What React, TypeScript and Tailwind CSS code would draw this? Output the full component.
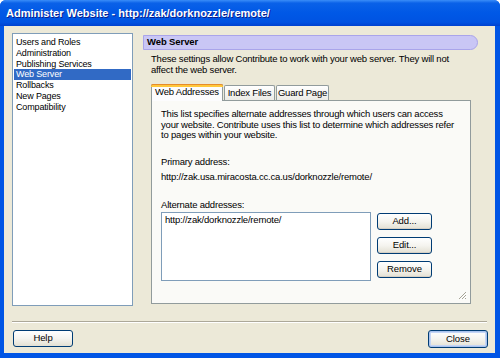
import React from "react";

const font = { fontFamily: '"Liberation Sans", Arial, sans-serif' };

function XPButton({ label }: { label: string }) {
  return (
    <div className="w-[55px] h-[17px] rounded-[3px] border border-[#003C74] flex items-center justify-center text-[9.5px] tracking-[-0.1px] text-black bg-gradient-to-b from-[#FFFFFF] via-[#F5F4EF] to-[#E3E0D3] shadow-[inset_0_-1px_0_#D6D0C5]">
      {label}
    </div>
  );
}

export default function App() {
  const items = [
    "Users and Roles",
    "Administration",
    "Publishing Services",
    "Web Server",
    "Rollbacks",
    "New Pages",
    "Compatibility",
  ];
  return (
    <div
      className="w-[500px] h-[358px] flex flex-col bg-[#0055E5] overflow-hidden rounded-t-[6px]"
      style={font}
    >
      {/* Title bar */}
      <div className="h-[26px] shrink-0 flex items-center pl-[6px] bg-[linear-gradient(to_bottom,#3A8DF8_0%,#0A61E8_12%,#0058E6_50%,#0053E2_85%,#0042D0_100%)]">
        <span className="text-white font-bold text-[11px] [text-shadow:1px_1px_0_#0A1E8C]">
          Administer Website - http://zak/dorknozzle/remote/
        </span>
      </div>
      {/* Body */}
      <div className="flex-1 ml-[4px] mr-[5px] mb-[5px] bg-[#ECE9D8] flex flex-col pt-[7px] px-[8px] text-black">
        <div className="flex h-[273px]">
          {/* list */}
          <div className="w-[121px] h-[273px] bg-white border border-[#7F9DB9] pt-[3px] px-[1px] text-[9px] tracking-[-0.15px]">
            {items.map((it) => (
              <div
                key={it}
                className={`h-[10.75px] leading-[10.75px] pl-[2px] ${
                  it === "Web Server" ? "bg-[#316AC5] text-white" : ""
                }`}
              >
                {it}
              </div>
            ))}
          </div>
          {/* right pane */}
          <div className="flex-1 pl-[10px] flex flex-col">
            <div className="mt-[2px] h-[15px] w-[335px] rounded-r-[8px] bg-[#C9C6F5] border border-[#A9A4EA] flex items-center pl-[3px] text-[9.5px] font-bold tracking-[-0.1px]">
              Web Server
            </div>
            <div className="mt-[4px] pl-[8px] text-[9.5px] tracking-[-0.2px] leading-[10.5px] whitespace-nowrap">
              These settings allow Contribute to work with your web server. They will not
              <br />
              affect the web server.
            </div>
            {/* tabs */}
            <div className="mt-[8px] ml-[8px] flex items-end h-[17px] text-[9.5px] tracking-[-0.2px] whitespace-nowrap">
              <div className="relative h-[17px] w-[72px] bg-[#FCFCFE] border border-[#919B9C] border-b-0 rounded-t-[2px] flex items-center justify-center z-10 -mb-[1px] pb-[1px]">
                <div className="absolute -top-[1px] -left-[1px] -right-[1px] h-[3px] bg-[#FFC83C] rounded-t-[2px] border-t border-[#E68B2C]" />
                Web Addresses
              </div>
              <div className="h-[15px] w-[51px] ml-[1px] bg-gradient-to-b from-[#FFFFFF] to-[#ECEBE6] border border-[#919B9C] border-b-0 rounded-t-[2px] flex items-center justify-center">
                Index Files
              </div>
              <div className="h-[15px] w-[53px] ml-[1px] bg-gradient-to-b from-[#FFFFFF] to-[#ECEBE6] border border-[#919B9C] border-b-0 rounded-t-[2px] flex items-center justify-center">
                Guard Page
              </div>
            </div>
            <div className="relative ml-[8px] w-[320px] h-[204px] border border-[#919B9C] bg-[#FAFAF7] pl-[9px] pt-[8px] text-[9.5px] tracking-[-0.2px] whitespace-nowrap">
              <div className="leading-[10.5px]">
                This list specifies alternate addresses through which users can access
                <br />
                your website. Contribute uses this list to determine which addresses refer
                <br />
                to pages within your website.
              </div>
              <div className="mt-[13px] leading-[15px]">
                Primary address:
                <br />
                http://zak.usa.miracosta.cc.ca.us/dorknozzle/remote/
              </div>
              <div className="mt-[15px] leading-[11px]">Alternate addresses:</div>
              <div className="mt-[2px] flex">
                <div className="w-[210px] h-[69px] bg-white border border-[#7F9DB9] pl-[3px] pt-[1px] leading-[11px]">
                  http://zak/dorknozzle/remote/
                </div>
                <div className="ml-[6px] mt-[1px] flex flex-col gap-[7px]">
                  <XPButton label="Add..." />
                  <XPButton label="Edit..." />
                  <XPButton label="Remove" />
                </div>
              </div>
              <svg
                className="absolute right-[3px] bottom-[3px]"
                width="9"
                height="9"
                viewBox="0 0 9 9"
              >
                <path d="M8 1 L1 8 M8 4 L4 8 M8 7 L7 8" stroke="#A6A396" strokeWidth="1" />
                <path d="M9 2 L2 9 M9 5 L5 9" stroke="#FFFFFF" strokeWidth="1" />
              </svg>
            </div>
          </div>
        </div>
        {/* separator */}
        <div className="mt-[15px] h-[2px] border-t border-[#ACA899] border-b border-b-white" />
        {/* bottom buttons */}
        <div className="mt-[7px] flex justify-between text-[9.5px] tracking-[-0.1px]">
          <div className="w-[60px] h-[17px] ml-[1px] rounded-[3px] border border-[#003C74] flex items-center justify-center bg-gradient-to-b from-[#FFFFFF] via-[#F5F4EF] to-[#E3E0D3]">
            Help
          </div>
          <div className="w-[60px] h-[18px] mr-[-1px] rounded-[3px] border border-[#003C74] flex items-center justify-center bg-gradient-to-b from-[#FFFFFF] via-[#F5F4EF] to-[#E3E0D3] shadow-[inset_0_0_0_1px_#A9C3EE,inset_0_0_0_2px_#C5D5F5]">
            Close
          </div>
        </div>
      </div>
    </div>
  );
}
